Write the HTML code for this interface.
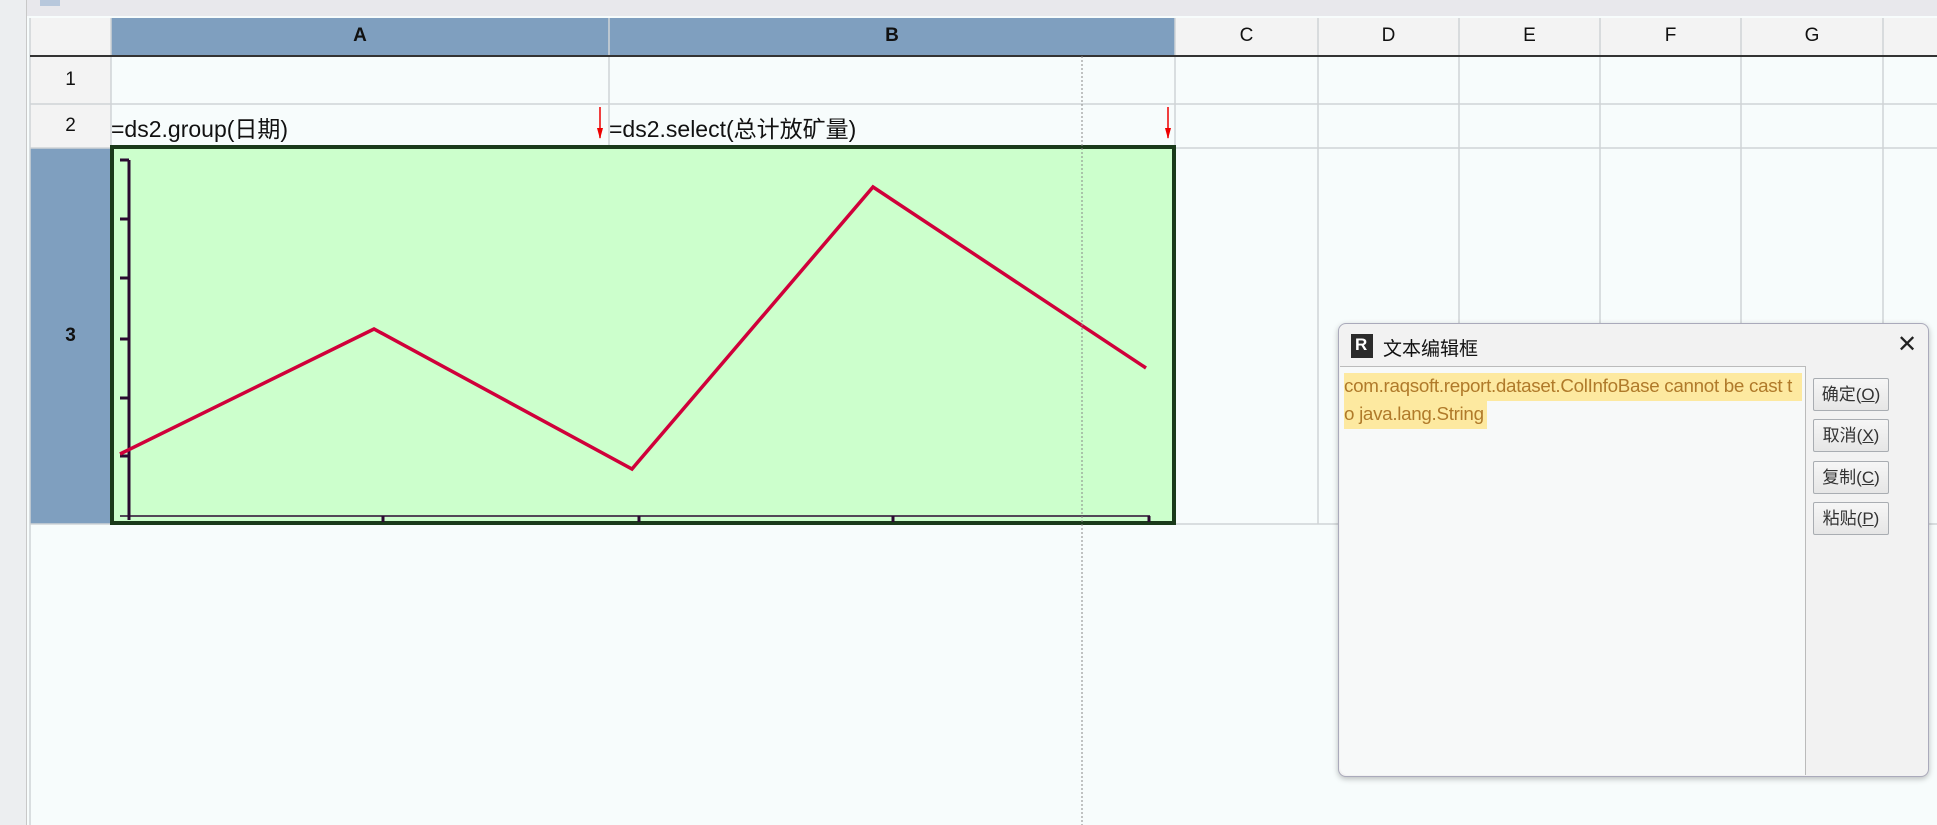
<!DOCTYPE html>
<html><head><meta charset="utf-8"><style>
body{margin:0;width:1937px;height:825px;overflow:hidden;background:#f7fcfc;font-family:"Liberation Sans","Noto Sans CJK SC",sans-serif;position:relative}
.a{position:absolute}
.t{position:absolute;font-size:20px;color:#111;white-space:nowrap}
.hd{position:absolute;font-size:19px;text-align:center;color:#111}
.btn{position:absolute;left:1813px;width:74px;height:31px;border:1px solid #a9adb2;background:linear-gradient(#f6f6f6,#e6e6e6);font-size:17px;text-align:center;line-height:31px;color:#333;border-radius:2px}
.btn u{text-decoration:underline}
</style></head><body>
<div class="a" style="left:0;top:0;width:1937px;height:16px;background:#e8e8ec"></div>
<div class="a" style="left:0;top:0;width:26px;height:825px;background:#eceef0;border-right:1px solid #c8c8c8"></div>
<div class="a" style="left:40px;top:0;width:20px;height:6px;background:#b8c8dc"></div>
<svg class="a" style="left:0;top:0" width="1937" height="825">
<rect x="30" y="18" width="1907" height="37" fill="#f3f3f3"/>
<rect x="111" y="18" width="1064" height="37" fill="#7f9fbf"/>
<rect x="30" y="55" width="81" height="93" fill="#f3f3f3"/>
<rect x="30" y="148" width="81" height="376" fill="#7f9fbf"/>
<g stroke="#cfd3d6" stroke-width="1.5">
<line x1="30" y1="18" x2="30" y2="825"/>
<line x1="111" y1="18" x2="111" y2="524"/>
<line x1="609" y1="18" x2="609" y2="148"/>
<line x1="1175" y1="18" x2="1175" y2="524"/>
<line x1="1318" y1="18" x2="1318" y2="524"/>
<line x1="1459" y1="18" x2="1459" y2="524"/>
<line x1="1600" y1="18" x2="1600" y2="524"/>
<line x1="1741" y1="18" x2="1741" y2="524"/>
<line x1="1883" y1="18" x2="1883" y2="524"/>
<line x1="30" y1="104" x2="1937" y2="104"/>
<line x1="30" y1="148" x2="1937" y2="148"/>
<line x1="30" y1="524" x2="1937" y2="524"/>
</g>
<line x1="30" y1="56" x2="1937" y2="56" stroke="#333" stroke-width="2"/>
<rect x="112" y="147" width="1062" height="376" fill="#ccffcc" stroke="#1a3a1a" stroke-width="4"/>
<g stroke="#2a0a30" stroke-width="3">
<line x1="129" y1="160" x2="129" y2="520"/>
<line x1="120" y1="160" x2="129" y2="160"/><line x1="120" y1="219" x2="129" y2="219"/><line x1="120" y1="278" x2="129" y2="278"/><line x1="120" y1="339" x2="129" y2="339"/><line x1="120" y1="398" x2="129" y2="398"/><line x1="120" y1="456" x2="129" y2="456"/>
<line x1="383" y1="516" x2="383" y2="522"/><line x1="639" y1="516" x2="639" y2="522"/><line x1="893" y1="516" x2="893" y2="522"/><line x1="1149" y1="516" x2="1149" y2="522"/>
</g>
<line x1="120" y1="516" x2="1150" y2="516" stroke="#2a0a30" stroke-width="1.5"/>
<polyline points="120,454 374,329 632,469 873,187 1146,368" fill="none" stroke="#d0003a" stroke-width="3.5"/>
<line x1="1082" y1="56" x2="1082" y2="825" stroke="#888" stroke-width="1" stroke-dasharray="2,2"/>
<g stroke="#e00" stroke-width="1.5"><line x1="600" y1="107" x2="600" y2="138"/><line x1="1168" y1="107" x2="1168" y2="138"/></g>
<polygon points="597,128 603,128 600,139" fill="#e00"/><polygon points="1165,128 1171,128 1168,139" fill="#e00"/>
</svg>
<div class="hd" style="left:111px;top:25px;width:498px;font-weight:bold">A</div>
<div class="hd" style="left:609px;top:25px;width:566px;font-weight:bold">B</div>
<div class="hd" style="left:1175px;top:25px;width:143px">C</div>
<div class="hd" style="left:1318px;top:25px;width:141px">D</div>
<div class="hd" style="left:1459px;top:25px;width:141px">E</div>
<div class="hd" style="left:1600px;top:25px;width:141px">F</div>
<div class="hd" style="left:1741px;top:25px;width:142px">G</div>
<div class="hd" style="left:30px;top:69px;width:81px">1</div>
<div class="hd" style="left:30px;top:115px;width:81px">2</div>
<div class="hd" style="left:30px;top:325px;width:81px;font-weight:bold">3</div>
<div class="t" style="left:111px;top:110px;font-size:23px">=ds2.group(日期)</div>
<div class="t" style="left:609px;top:110px;font-size:23px">=ds2.select(总计放矿量)</div>
<div class="a" style="left:1338px;top:323px;width:589px;height:452px;background:#f2f2f2;border:1px solid #aab;border-radius:8px;box-shadow:0 2px 6px rgba(0,0,0,.25)"></div>
<div class="a" style="left:1351px;top:334px;width:22px;height:24px;background:#2b2b2b"></div>
<div class="a" style="left:1355px;top:335px;color:#fff;font-weight:bold;font-size:17px">R</div>
<div class="t" style="left:1383px;top:334px;font-size:19px">文本编辑框</div>
<div class="a" style="left:1897px;top:330px;font-size:24px;color:#222">✕</div>
<div class="a" style="left:1340px;top:366px;width:465px;height:408px;background:#f7f9f9;border-top:1px solid #bbb;border-right:1px solid #bbb;border-bottom-left-radius:8px"></div>
<div class="a" style="left:1344px;top:373px;width:458px;height:28px;background:#fde9a0"></div>
<div class="a" style="left:1344px;top:401px;width:143px;height:28px;background:#fde9a0"></div>
<div class="t" style="left:1344px;top:375px;font-size:18.8px;color:#b07a2a;letter-spacing:-0.3px">com.raqsoft.report.dataset.ColInfoBase cannot be cast t</div>
<div class="t" style="left:1344px;top:403px;font-size:18.8px;color:#b07a2a;letter-spacing:-0.3px">o java.lang.String</div>
<div class="btn" style="top:378px">确定(<u>O</u>)</div>
<div class="btn" style="top:419px">取消(<u>X</u>)</div>
<div class="btn" style="top:461px">复制(<u>C</u>)</div>
<div class="btn" style="top:502px">粘贴(<u>P</u>)</div>
</body></html>
